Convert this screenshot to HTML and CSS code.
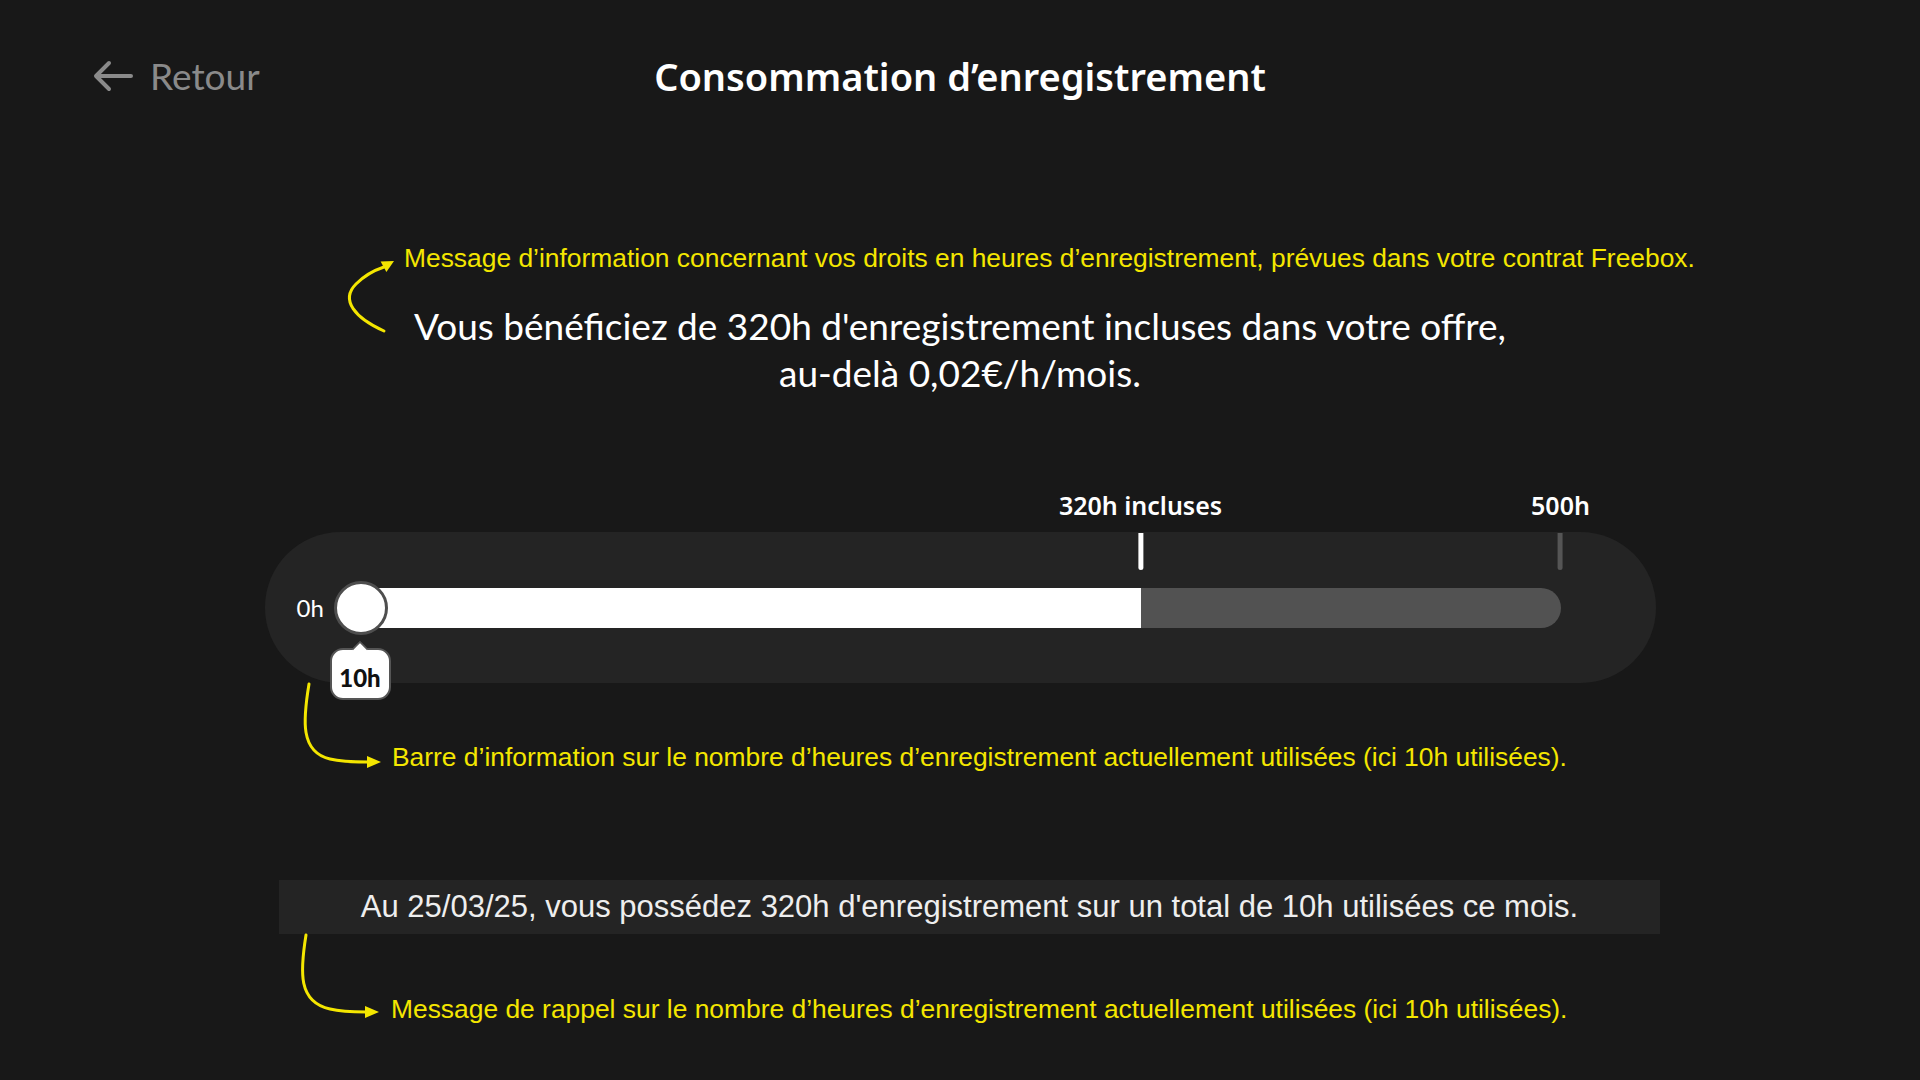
FILE: index.html
```html
<!DOCTYPE html>
<html lang="fr">
<head>
  <meta name="viewport" content="width=device-width, initial-scale=1.0">
  <title>Consommation d'enregistrement</title>
  <link rel="stylesheet" href="styles.css">
</head>
<body>

<!-- Annotation arrows, drawn over the page -->
<svg class="annotations" viewBox="0 0 1920 1080" width="1920" height="1080">
  <g fill="none" stroke="#f4e600" stroke-width="3" stroke-linecap="round">
    <path d="M384,331 C355,318 340,300 356,284 C364,276 372,271 384,267" />
    <path d="M309,684 C303,720 300,752 330,759 C342,762 355,762 368,762" />
    <path d="M306,935 C300,972 298,1002 330,1009 C342,1012 355,1012 366,1012" />
  </g>
  <g fill="#f4e600">
    <polygon points="394,261 386.4,272 380.6,261.5" />
    <polygon points="381,762 367,756 367,768" />
    <polygon points="379,1012 365,1006 365,1018" />
  </g>
</svg>

<header class="topbar">
  <a class="back" href="#">
    <svg class="back-icon" viewBox="0 0 40 32" width="40" height="32">
      <path d="M38 16 H4 M16 3 L3 16 L16 29" fill="none" stroke="#8a8a8a" stroke-width="4" stroke-linecap="round" stroke-linejoin="round" />
    </svg>
    <span>Retour</span>
  </a>
  <h1 class="title">Consommation d’enregistrement</h1>
  <div></div>
</header>

<section class="intro">
  <p class="note note-top">Message d’information concernant vos droits en heures d’enregistrement, prévues dans votre contrat Freebox.</p>
  <p class="offer">Vous bénéficiez de 320h d'enregistrement incluses dans votre offre,<br>au-delà 0,02€/h/mois.</p>
</section>

<section class="gauge">
  <div class="gauge-card">
    <span class="gauge-zero">0h</span>
    <div class="track">
      <div class="track-fill" style="width: 65%"></div>
      <div class="mark mark-included" style="left: 65%">
        <span class="mark-label">320h incluses</span>
        <span class="mark-tick"></span>
      </div>
      <div class="mark mark-max" style="left: 100%">
        <span class="mark-label">500h</span>
        <span class="mark-tick"></span>
      </div>
      <div class="knob"></div>
      <div class="bubble">10h</div>
    </div>
  </div>
  <p class="note note-gauge">Barre d’information sur le nombre d’heures d’enregistrement actuellement utilisées (ici 10h utilisées).</p>
</section>

<section class="reminder">
  <div class="reminder-bar">Au 25/03/25, vous possédez 320h d'enregistrement sur un total de 10h utilisées ce mois.</div>
  <p class="note note-reminder">Message de rappel sur le nombre d’heures d’enregistrement actuellement utilisées (ici 10h utilisées).</p>
</section>

</body>
</html>
```

FILE: styles.css
```css
body {
  margin: 0;
  width: 1920px;
  height: 1080px;
  background: #181818;
  color: #fff;
  font-family: "Lato", "Noto Sans", sans-serif;
  overflow: hidden;
  position: relative;
}

p {
  margin: 0;
}

.annotations {
  position: absolute;
  left: 0;
  top: 0;
  pointer-events: none;
  z-index: 5;
}

/* Header */
.topbar {
  display: grid;
  grid-template-columns: 1fr auto 1fr;
  align-items: center;
  padding: 52px 0 0;
  height: 48px;
}

.back {
  display: flex;
  align-items: center;
  gap: 17px;
  padding-left: 93px;
  color: #8a8a8a;
  text-decoration: none;
  font-size: 37px;
  line-height: 48px;
}

.title {
  margin: 0;
  font-family: "Noto Sans", sans-serif;
  font-weight: 600;
  font-size: 38px;
  line-height: 48px;
}

/* Yellow annotations */
.note {
  color: #f4e600;
  font-family: "Liberation Sans", Arial, sans-serif;
  font-size: 26.4px;
  line-height: 28px;
  white-space: nowrap;
}

/* Intro */
.intro {
  padding-top: 144px;
}

.note-top {
  padding-left: 404px;
}

.offer {
  margin-top: 30px;
  text-align: center;
  font-size: 37px;
  line-height: 47px;
}

/* Gauge */
.gauge {
  margin-top: 136px;
}

.gauge-card {
  width: 1391px;
  height: 151px;
  margin: 0 auto;
  box-sizing: border-box;
  padding: 0 95px 0 32px;
  display: flex;
  align-items: center;
  background: #242424;
  border-radius: 76px;
}

.gauge-zero {
  width: 30px;
  font-size: 24px;
  line-height: 30px;
}

.track {
  flex: 1;
  margin-left: 34px;
  height: 40px;
  position: relative;
  background: #525252;
  border-radius: 0 20px 20px 0;
}

.track-fill {
  height: 100%;
  background: #fff;
}

.mark {
  position: absolute;
  bottom: 58px;
  transform: translateX(-50%);
  display: flex;
  flex-direction: column;
  align-items: center;
  gap: 13px;
}

.mark-label {
  font-family: "Noto Sans", sans-serif;
  font-weight: 600;
  font-size: 25px;
  line-height: 30px;
  white-space: nowrap;
}

.mark-tick {
  width: 5px;
  height: 37px;
  border-radius: 0 0 3px 3px;
  background: #fff;
}

.mark-max .mark-tick {
  background: #555;
}

.knob {
  position: absolute;
  left: -27px;
  top: -7px;
  width: 48px;
  height: 48px;
  border: 3px solid #4e4e4e;
  border-radius: 50%;
  background: #fff;
}

.bubble {
  position: absolute;
  left: -31px;
  top: 60px;
  width: 61px;
  height: 52px;
  box-sizing: border-box;
  border: 2px solid #555;
  border-radius: 13px;
  background: #fff;
  color: #111;
  font-weight: 900;
  font-size: 24px;
  line-height: 56px;
  text-align: center;
}

.bubble::before {
  content: "";
  position: absolute;
  left: 50%;
  top: -7px;
  width: 10px;
  height: 10px;
  margin-left: -6px;
  background: #fff;
  border-left: 2px solid #555;
  border-top: 2px solid #555;
  border-radius: 2px 0 0 0;
  transform: rotate(45deg);
}

.note-gauge {
  margin-top: 60px;
  padding-left: 392px;
}

/* Reminder */
.reminder {
  margin-top: 109px;
}

.reminder-bar {
  width: 1381px;
  height: 54px;
  margin-left: 279px;
  background: #242424;
  color: #eee;
  font-family: "Liberation Sans", Arial, sans-serif;
  font-size: 31px;
  line-height: 54px;
  text-align: center;
}

.note-reminder {
  margin-top: 61px;
  padding-left: 391px;
}
```
